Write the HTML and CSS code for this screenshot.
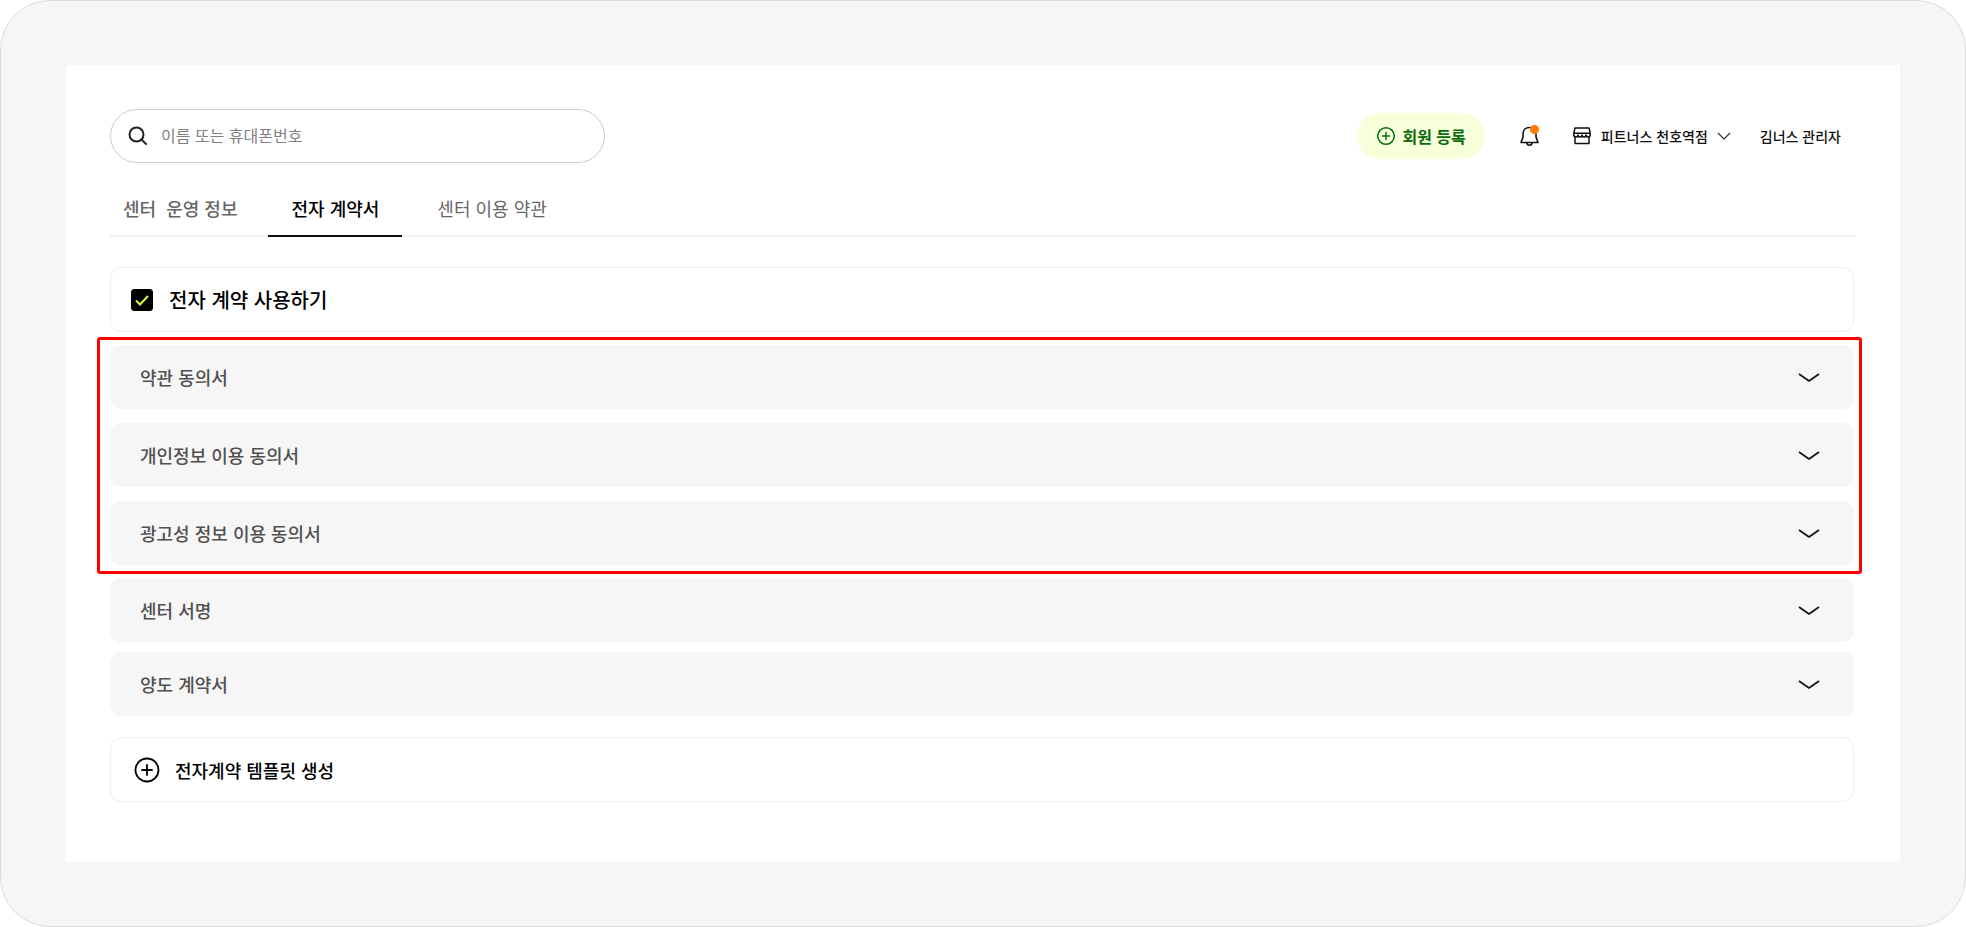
FILE: index.html
```html
<!DOCTYPE html>
<html lang="ko">
<head>
    <meta charset="UTF-8">
    <meta name="viewport" content="width=device-width, initial-scale=1.0">
    <title>전자 계약서</title>
    <link rel="stylesheet" href="styles.css">
</head>
<body>
    <svg class="sprite" aria-hidden="true">
        <symbol id="chevron" viewBox="0 0 22 12">
            <path d="M1 3 L11 10 L21 3" fill="none" stroke="currentColor" stroke-width="1.7" stroke-linejoin="round"/>
        </symbol>
    </svg>

    <div class="frame">
        <div class="screen">
            <header class="topbar">
                <label class="search">
                    <svg width="22" height="22" viewBox="0 0 22 22" aria-hidden="true">
                        <circle cx="9.500" cy="9.500" r="7" fill="none" stroke="#222" stroke-width="2"/>
                        <path d="M14.500 14.500 L19 19" stroke="#222" stroke-width="2" stroke-linecap="round"/>
                    </svg>
                    <input type="text" placeholder="이름 또는 휴대폰번호" aria-label="회원 검색">
                </label>

                <button class="register" type="button">
                    <svg width="20" height="20" viewBox="0 0 20 20" fill="none" stroke="currentColor" stroke-width="1.5" stroke-linecap="round" aria-hidden="true">
                        <circle cx="10" cy="10" r="8.300"/>
                        <path d="M10 6.500 V13.500 M6.500 10 H13.500"/>
                    </svg>
                    회원 등록
                </button>

                <button class="bell" type="button" aria-label="알림">
                    <svg width="22" height="24" viewBox="0 0 22 24" fill="none" stroke="#111" stroke-width="1.600" stroke-linejoin="round" aria-hidden="true">
                        <path d="M4 10 C4 6 6.500 3.500 10.500 3.500 S17 6 17 10 V13 L19 18.500 H2 L4 13 Z"/>
                        <path d="M8 19 C8 22 13 22 13 19"/>
                        <circle cx="15.500" cy="5.500" r="4.500" fill="#ff7a00" stroke="none"/>
                    </svg>
                </button>

                <button class="branch" type="button">
                    <svg width="20" height="20" viewBox="0 0 20 20" fill="none" stroke="#111" stroke-width="1.500" stroke-linejoin="round" aria-hidden="true">
                        <path d="M3 2 H17 L18.200 7 V9 C18.200 11.500 14 11.500 14 9 C14 11.500 10 11.500 10 9 C10 11.500 6 11.500 6 9 C6 11.500 1.800 11.500 1.800 9 V7 Z"/>
                        <path d="M1.800 7.200 H18.200 M3 11 V17.500 H17 V11"/>
                    </svg>
                    피트너스 천호역점
                    <svg width="14" height="10" viewBox="0 0 14 10" fill="none" stroke="#333" stroke-width="1.200" aria-hidden="true">
                        <path d="M1 2 L7 8 L13 2"/>
                    </svg>
                </button>

                <span class="user">김너스 관리자</span>
            </header>

            <nav class="tabs">
                <a class="tab first" href="#info">센터&nbsp; 운영 정보</a>
                <a class="tab active" href="#contract">전자 계약서</a>
                <a class="tab" href="#terms">센터 이용 약관</a>
            </nav>

            <main class="content">
                <label class="card use-contract">
                    <input type="checkbox" checked>
                    전자 계약 사용하기
                </label>

                <div class="agreements">
                    <button class="row" type="button">약관 동의서<svg class="arrow"><use href="#chevron"/></svg></button>
                    <button class="row" type="button">개인정보 이용 동의서<svg class="arrow"><use href="#chevron"/></svg></button>
                    <button class="row" type="button">광고성 정보 이용 동의서<svg class="arrow"><use href="#chevron"/></svg></button>
                </div>

                <div class="contracts">
                    <button class="row" type="button">센터 서명<svg class="arrow"><use href="#chevron"/></svg></button>
                    <button class="row" type="button">양도 계약서<svg class="arrow"><use href="#chevron"/></svg></button>
                </div>

                <button class="card create" type="button">
                    <svg width="26" height="26" viewBox="0 0 26 26" fill="none" stroke="#000" stroke-width="1.800" stroke-linecap="round" aria-hidden="true">
                        <circle cx="13" cy="13" r="11.500"/>
                        <path d="M13 8 V18 M8 13 H18"/>
                    </svg>
                    전자계약 템플릿 생성
                </button>
            </main>
        </div>
    </div>
</body>
</html>
```
FILE: styles.css
```css
* {
    box-sizing: border-box;
}
body {
    margin: 0;
    background-color: white;
    color: #111;
    font-family: "Noto Sans CJK KR", sans-serif;
}
button, input {
    font-family: inherit;
}
button {
    border: none;
    background: none;
    padding: 0;
    cursor: pointer;
}
svg {
    flex-shrink: 0;
}
.sprite {
    display: none;
}

.frame {
    display: flex;
    min-height: 100vh;
    padding: 64px 65px;
    border: 1px solid #dcdcdc;
    border-radius: 50px;
    background-color: #f6f6f6;
}
.screen {
    flex: 1;
    padding: 44px;
    background-color: white;
}

/* top bar */
.topbar {
    display: flex;
    align-items: center;
}
.search {
    display: flex;
    align-items: center;
    gap: 12px;
    width: 495px;
    height: 54px;
    margin-right: auto;
    padding: 0 16px;
    border: 1px solid #ccc;
    border-radius: 27px;
}
.search input {
    flex: 1;
    min-width: 0;
    padding: 0 0 2px;
    border: none;
    outline: none;
    background: none;
    font-size: 16px;
}
.search input::placeholder {
    color: #808080;
}
.register {
    display: flex;
    align-items: center;
    gap: 6px;
    height: 46px;
    padding: 0 19px;
    border-radius: 23px;
    background-color: #f7ffdb;
    color: #0b6b0b;
    font-size: 16px;
    font-weight: 700;
}
.bell {
    display: flex;
    margin: 0 31px 0 34px;
}
.branch {
    display: flex;
    align-items: center;
    gap: 9px;
    color: #111;
    font-size: 14px;
    font-weight: 500;
}
.user {
    margin: 0 15px 0 29px;
    font-size: 14px;
    font-weight: 500;
}

/* tabs */
.tabs {
    display: flex;
    gap: 22px;
    margin-top: 18px;
    border-bottom: 2px solid #f0f0f0;
}
.tab {
    margin-bottom: -2px;
    padding: 0 13px;
    border-bottom: 2px solid transparent;
    color: #666;
    font-size: 18px;
    line-height: 54px;
    text-decoration: none;
}
.tab.first {
    padding-right: 9px;
    font-weight: 500;
}
.tab.active {
    padding: 0 23px;
    border-color: #111;
    color: #000;
    font-weight: 500;
}

/* contract list */
.content {
    display: flex;
    flex-direction: column;
    margin-top: 30px;
    padding-right: 2px;
}
.card {
    display: flex;
    align-items: center;
    height: 65px;
    border: 1px solid #eee;
    border-radius: 11px;
    color: #000;
    font-weight: 500;
}
.use-contract {
    gap: 16px;
    padding: 0 20px;
    font-size: 20px;
}
.use-contract input {
    appearance: none;
    width: 22px;
    height: 22px;
    margin: 0;
    border: 1px solid #000;
    border-radius: 3px;
}
.use-contract input:checked {
    background: #000 url("data:image/svg+xml,%3Csvg xmlns='http://www.w3.org/2000/svg' viewBox='0 0 20 20'%3E%3Cpath d='M4 10.500 L8 14.500 L16 6' fill='none' stroke='%23d4ff3f' stroke-width='2'/%3E%3C/svg%3E") center / 20px no-repeat;
}
.agreements {
    position: relative;
    display: flex;
    flex-direction: column;
    gap: 14px;
    margin-top: 13px;
}
/* red outline round the three agreements */
.agreements::after {
    content: "";
    position: absolute;
    inset: -8px -8px -9px -13px;
    border: 3px solid #ff0000;
    border-radius: 3px;
    pointer-events: none;
}
.contracts {
    display: flex;
    flex-direction: column;
    gap: 10px;
    margin: 13px 0 21px;
}
.row {
    display: flex;
    align-items: center;
    justify-content: space-between;
    height: 64px;
    padding: 0 34px 1px 30px;
    border-radius: 11px;
    background-color: #f6f6f6;
    color: #505050;
    font-size: 18px;
    font-weight: 500;
}
.arrow {
    width: 22px;
    height: 12px;
    color: #111;
}
.create {
    gap: 15px;
    padding: 0 23px;
    font-size: 18px;
}
```
